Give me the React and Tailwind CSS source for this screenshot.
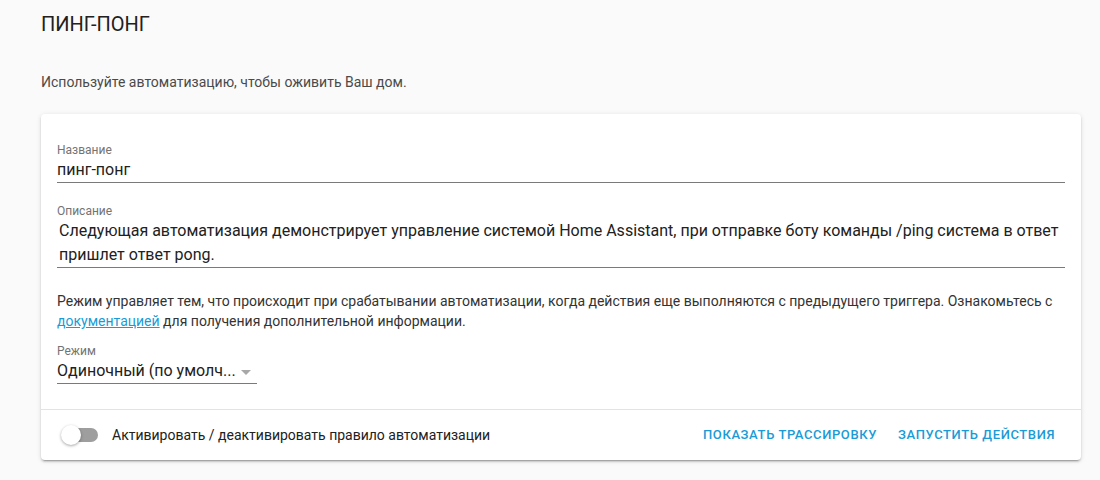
import React from "react";

function Field({ label, children, className = "" }) {
  return (
    <div className={className}>
      <div className="text-xs leading-4 text-[#737373]">{label}</div>
      <div className="border-b border-[#7a7a7a] text-base leading-6 text-[#212121]">{children}</div>
    </div>
  );
}

function Toggle() {
  return (
    <div className="relative h-5 w-[40px] flex items-center">
      <div className="ml-[3px] h-[14px] w-[34px] rounded-full bg-[#9e9e9e]" />
      <div className="absolute left-0 top-0 h-5 w-5 rounded-full bg-white shadow-[0_1px_3px_rgba(0,0,0,0.35)]" />
    </div>
  );
}

export default function App() {
  return (
    <div className="min-h-[480px] bg-[#fafafa] pl-[41px] font-['Roboto',sans-serif]">
      <h1 className="pt-[10px] text-xl leading-7 font-normal text-[#212121]">ПИНГ-ПОНГ</h1>
      <p className="mt-[34px] text-sm leading-5 text-[#4a4a4a]">
        Используйте автоматизацию, чтобы оживить Ваш дом.
      </p>

      <div className="mt-[22px] w-[1040px] rounded bg-white shadow-[0_2px_2px_0_rgba(0,0,0,0.14),0_1px_5px_0_rgba(0,0,0,0.12),0_3px_1px_-2px_rgba(0,0,0,0.2)]">
        <div className="px-4 pt-7 pb-[25px]">
          <Field label="Название">пинг-понг</Field>

          <Field label="Описание" className="mt-5">
            <div className="pl-[2px]">
              Следующая автоматизация демонстрирует управление системой Home Assistant, при отправке боту команды /ping система в ответ
              <br />
              пришлет ответ pong.
            </div>
          </Field>

          <p className="mt-[23px] text-sm leading-5 text-[#333]">
            Режим управляет тем, что происходит при срабатывании автоматизации, когда действия еще выполняются с предыдущего триггера. Ознакомьтесь с
            <br />
            <a href="#" className="text-[#1a9bd7] underline">документацией</a> для получения дополнительной информации.
          </p>

          <Field label="Режим" className="mt-3 w-[200px]">
            <div className="flex items-center justify-between pr-[6px]">
              <span>Одиночный (по умолч...</span>
              <svg width="10" height="5" viewBox="0 0 10 5" className="mt-[2px]">
                <path d="M0 0 L10 0 L5 5 Z" fill="#a8a8a8" />
              </svg>
            </div>
          </Field>
        </div>

        <div className="flex h-[51px] items-center border-t border-[#e3e3e3] pl-[20px] pr-[26px]">
          <Toggle />
          <span className="ml-[11px] text-sm text-[#212121]">Активировать / деактивировать правило автоматизации</span>
          <div className="ml-auto flex gap-[21px]">
            <button className="text-[13px] font-medium tracking-[0.6px] text-[#1a9bd7]">ПОКАЗАТЬ ТРАССИРОВКУ</button>
            <button className="text-[13px] font-medium tracking-[0.6px] text-[#1a9bd7]">ЗАПУСТИТЬ ДЕЙСТВИЯ</button>
          </div>
        </div>
      </div>
    </div>
  );
}
